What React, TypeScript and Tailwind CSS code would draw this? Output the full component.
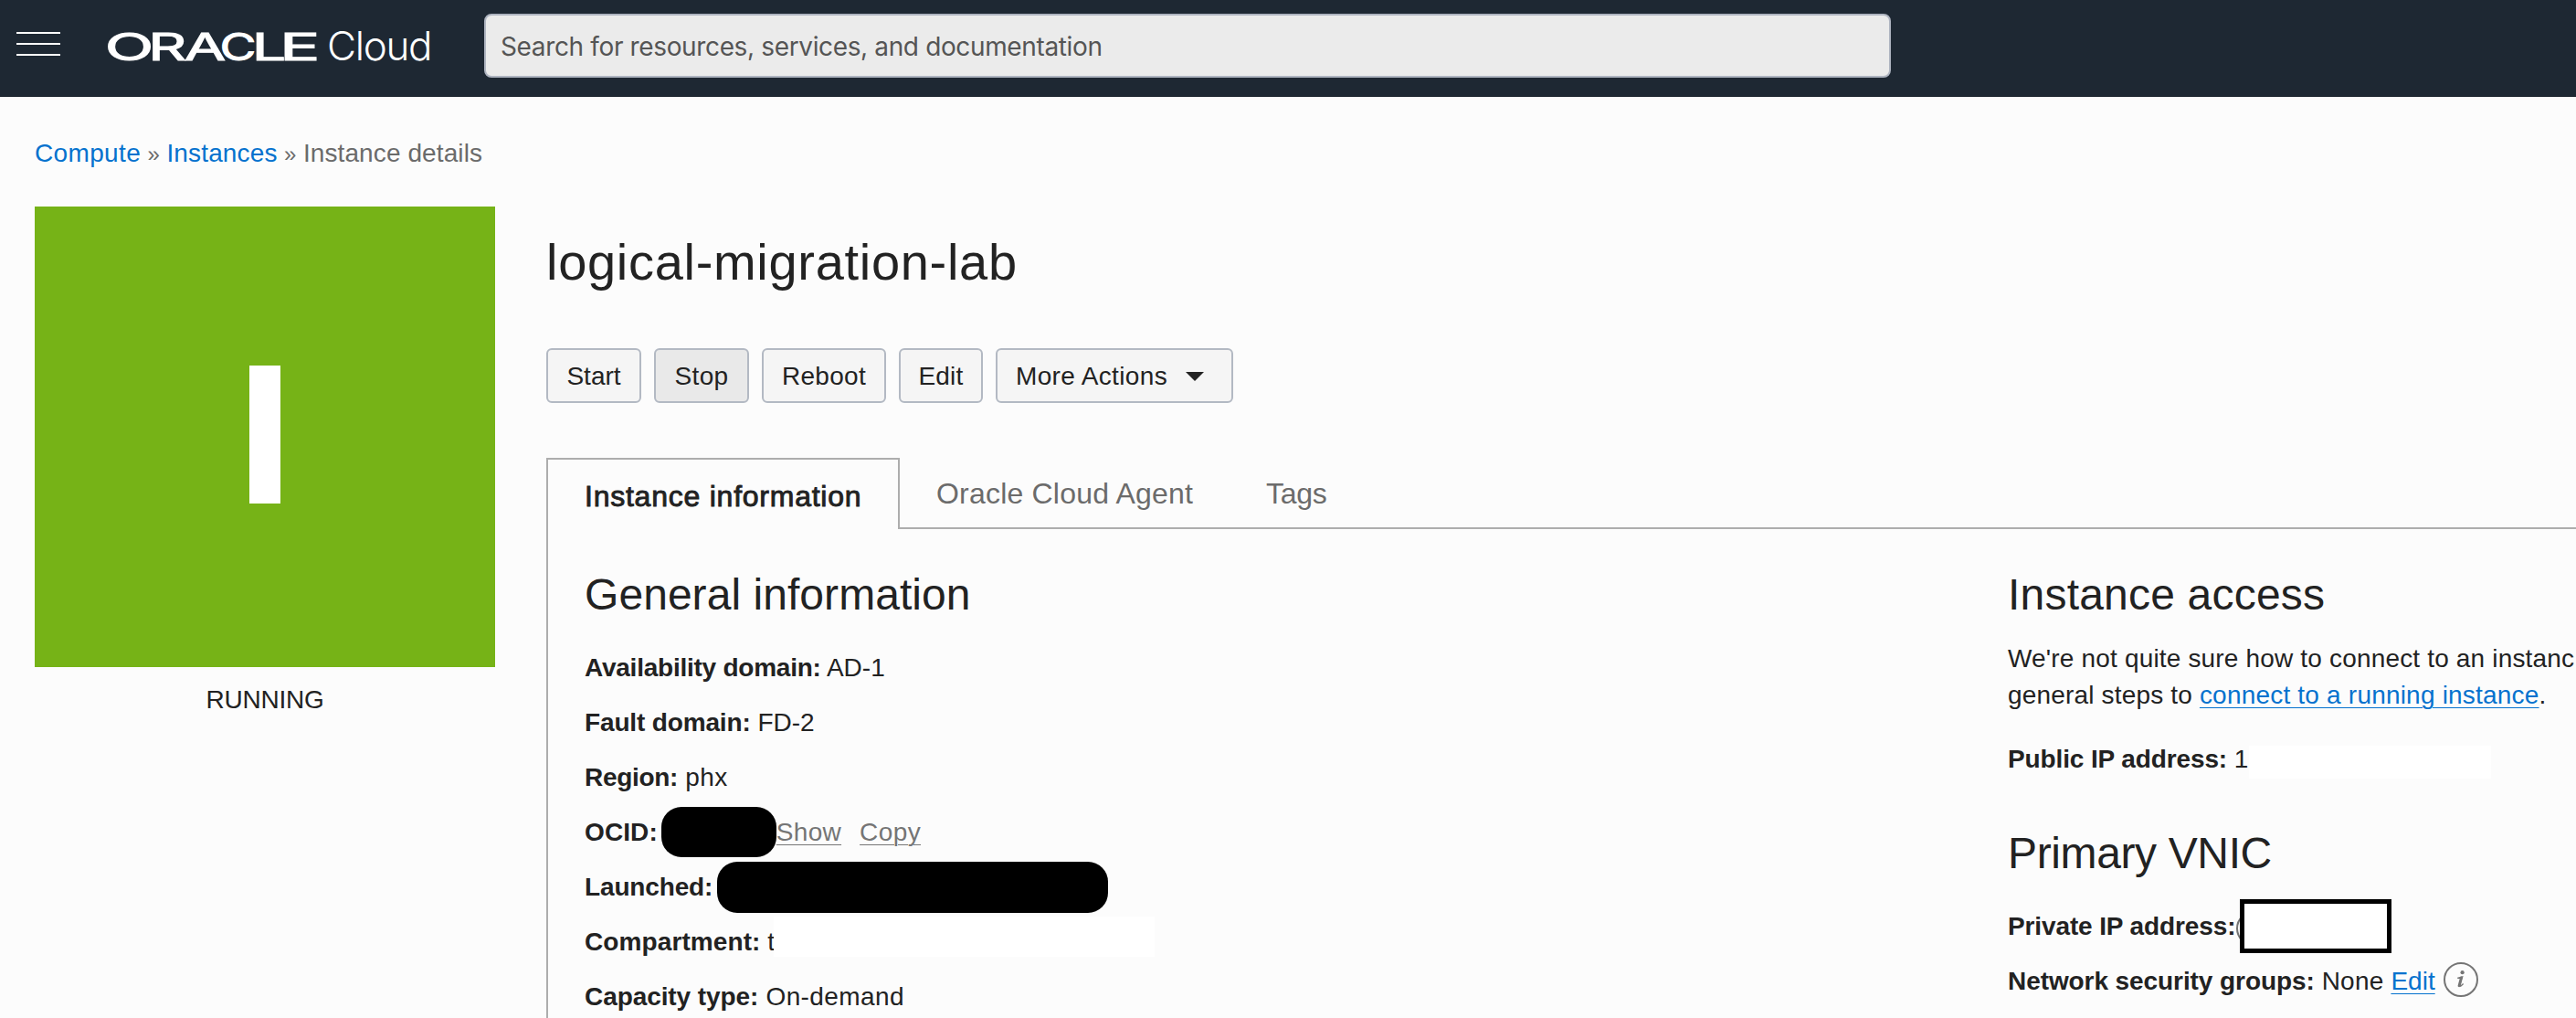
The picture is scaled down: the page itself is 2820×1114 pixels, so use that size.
import React from "react";

function Field({ label, tracking = "", children }: { label: string; tracking?: string; children?: React.ReactNode }) {
  return (
    <div className="flex h-[60px] items-center whitespace-pre">
      <span className={`font-bold ${tracking}`}>{label}</span>
      {children}
    </div>
  );
}

function Heading({ children, className = "" }: { children: React.ReactNode; className?: string }) {
  return <h2 className={`h-[60px] text-[48px] leading-[60px] ${className}`}>{children}</h2>;
}

function ActionButton({ children, className = "" }: { children: React.ReactNode; className?: string }) {
  return (
    <button
      className={`flex h-[60px] shrink-0 items-center justify-center rounded-[6px] border-2 border-[#b3b9c3] pt-[2px] ${className}`}
    >
      {children}
    </button>
  );
}

function InfoIcon({ className = "" }: { className?: string }) {
  return (
    <svg viewBox="0 0 38 38" className={`h-[38px] w-[38px] shrink-0 ${className}`}>
      <circle cx="19" cy="19" r="18" fill="none" stroke="#757575" strokeWidth="2" />
      <circle cx="20.6" cy="11.2" r="2.1" fill="#757575" />
      <path
        d="M15.2 17.4 L20.6 16 L18 25.6 Q17.8 26.8 19 26 L21.6 23.6"
        fill="none"
        stroke="#757575"
        strokeWidth="1.4"
      />
      <path d="M19.3 16.8 L16.9 25.8" stroke="#757575" strokeWidth="2.6" strokeLinecap="round" />
    </svg>
  );
}

function Header() {
  return (
    <header className="flex h-[106px] w-full items-start border-b border-[#18202a] bg-[#1e2833] text-white">
      <div className="ml-[18px] mt-[35px] flex w-[48px] flex-col gap-[10px]">
        <span className="h-[2px] bg-white" />
        <span className="h-[2px] bg-white" />
        <span className="h-[2px] bg-white" />
      </div>
      <svg viewBox="0 0 232 50" className="ml-[52px] mt-[26px] h-[50px] w-[232px] overflow-visible" fill="#fff">
        <text y="39.7" fontFamily="Inter" fontSize="41" fontWeight="400" stroke="#fff" strokeWidth="1">
          <tspan x="-3.3" textLength="53.6" lengthAdjust="spacingAndGlyphs">O</tspan>
          <tspan x="44.3" textLength="42" lengthAdjust="spacingAndGlyphs">R</tspan>
          <tspan x="83.7" textLength="45.5" lengthAdjust="spacingAndGlyphs">A</tspan>
          <tspan x="122.4" textLength="40" lengthAdjust="spacingAndGlyphs">C</tspan>
          <tspan x="157.7" textLength="37.5" lengthAdjust="spacingAndGlyphs">L</tspan>
          <tspan x="188.1" textLength="44.5" lengthAdjust="spacingAndGlyphs">E</tspan>
        </text>
      </svg>
      <span className="ml-[8px] mt-[20px] w-[120px] font-['Inter'] text-[44px] leading-[60px] font-light tracking-[-1.3px]">
        Cloud
      </span>
      <div className="ml-[52px] mt-[15px] flex h-[70px] w-[1540px] items-center rounded-[8px] border-2 border-[#aeb4c0] bg-[#ebebeb] pl-[16px] font-['Inter'] tracking-[-0.36px] text-[#555]">
        <span className="mt-[2px]">Search for resources, services, and documentation</span>
      </div>
    </header>
  );
}

export default function App() {
  return (
    <div className="h-[1114px] w-[2820px] overflow-hidden bg-[#fcfcfc] font-['Liberation_Sans',sans-serif] text-[28px] leading-[40px] text-[#222]">
      <Header />
      <nav className="mt-[42px] ml-[38px] flex h-[40px] items-baseline gap-[7.5px] text-[#6b6b6b]">
        <a className="tracking-[0.35px] text-[#0572ce]">Compute</a>
        <span className="text-[24px]">»</span>
        <a className="tracking-[0.14px] text-[#0572ce]">Instances</a>
        <span className="text-[24px]">»</span>
        <span className="tracking-[0.1px]">Instance details</span>
      </nav>
      <div className="mt-[38px] ml-[38px] flex gap-[56px]">
        <aside className="w-[504px] shrink-0">
          <div className="flex h-[504px] items-center justify-center bg-[#76b317]">
            <div className="mt-[-5px] h-[151px] w-[34px] bg-white" />
          </div>
          <div className="mt-[16px] text-center tracking-[-0.23px]">RUNNING</div>
        </aside>
        <main className="w-[2222px] shrink-0">
          <h1 className="mt-[29px] h-[64px] text-[56px] leading-[64px] tracking-[0.7px]">logical-migration-lab</h1>
          <div className="mt-[62px] flex gap-[14px]">
            <ActionButton className="w-[104px] bg-[#f5f5f5]">Start</ActionButton>
            <ActionButton className="w-[104px] bg-[#e9e9e9] tracking-[0.4px]">Stop</ActionButton>
            <ActionButton className="w-[136px] bg-[#f5f5f5] tracking-[0.3px]">Reboot</ActionButton>
            <ActionButton className="w-[92px] bg-[#f5f5f5] tracking-[0.2px]">Edit</ActionButton>
            <ActionButton className="w-[260px] bg-[#f5f5f5] tracking-[0.35px]">
              <span className="ml-[-10px]">More Actions</span>
              <svg viewBox="0 0 20 10" className="ml-[20px] h-[10px] w-[20px]" fill="#222">
                <path d="M0 0H20L10 10Z" />
              </svg>
            </ActionButton>
          </div>
          <div className="mt-[60px] flex h-[78px] text-[32px]">
            <div className="w-[387px] border-x-2 border-t-2 border-[#adadad] pt-[20px] pl-[40px] tracking-[0.76px] [-webkit-text-stroke:0.9px_#222]">
              Instance information
            </div>
            <div className="flex flex-1 border-b-2 border-[#adadad] pt-[19px] pl-[40px] text-[#6b6b6b]">
              <span className="w-[361px] tracking-[0.2px]">Oracle Cloud Agent</span>
              <span className="tracking-[-0.3px]">Tags</span>
            </div>
          </div>
          <div className="flex h-[540px] border-l-2 border-[#adadad] pt-[42px] pl-[40px]">
            <section className="w-[1558px] shrink-0">
              <Heading className="mb-[20px] tracking-[0.05px]">General information</Heading>
              <Field label="Availability domain:" tracking="tracking-[-0.24px]">
                <span className="tracking-[0px]"> AD-1</span>
              </Field>
              <Field label="Fault domain:" tracking="tracking-[-0.15px]"> FD-2</Field>
              <Field label="Region:" tracking="tracking-[-0.3px]">
                <span className="tracking-[0.4px]"> phx</span>
              </Field>
              <Field label="OCID:" tracking="tracking-[0.1px]">
                <span className="relative z-10 mt-[-2px] ml-[4px] h-[55px] w-[126px] rounded-[22px] bg-black" />
                <a className="tracking-[0.3px] text-[#757575] underline decoration-1 underline-offset-[4px]">Show</a>
                <a className="ml-[20px] tracking-[0.4px] text-[#757575] underline decoration-1 underline-offset-[4px]">
                  Copy
                </a>
              </Field>
              <Field label="Launched:" tracking="tracking-[-0.15px]">
                <span className="ml-[5px] h-[56px] w-[428px] rounded-[22px] bg-black" />
              </Field>
              <Field label="Compartment:" tracking="tracking-[0.1px]">
                <span> t</span>
                <span className="relative z-10 mt-[-12px] ml-[-1px] h-[44px] w-[417px] bg-white" />
              </Field>
              <Field label="Capacity type:" tracking="tracking-[-0.08px]">
                <span className="tracking-[0.4px]"> On-demand</span>
              </Field>
            </section>
            <section className="w-[622px] shrink-0">
              <Heading className="mb-[20px] tracking-[0.2px]">Instance access</Heading>
              <p className="mb-[20px] whitespace-nowrap tracking-[0.17px]">
                We're not quite sure how to connect to an instanc
                <br />
                general steps to{" "}
                <a className="tracking-[0.2px] text-[#0572ce] underline decoration-1 underline-offset-[4px]">
                  connect to a running instance
                </a>
                .
              </p>
              <Field label="Public IP address:" tracking="tracking-[-0.12px]">
                <span> 1</span>
                <span className="mt-[6px] ml-px h-[36px] w-[265px] bg-white" />
              </Field>
              <Heading className="mt-[43px] mb-[20px] tracking-[-0.37px]">Primary VNIC</Heading>
              <Field label="Private IP address:" tracking="tracking-[-0.12px]">
                <InfoIcon className="mt-[3px] ml-px" />
                <span className="relative z-10 mt-[-2px] ml-[-34px] h-[59px] w-[166px] border-[5px] border-black bg-white" />
              </Field>
              <Field label="Network security groups:" tracking="tracking-[-0.08px]">
                <span className="tracking-[0.2px]"> None </span>
                <a className="text-[#0572ce] underline decoration-1 underline-offset-[4px]">Edit</a>
                <InfoIcon className="mt-[-4px] ml-[9px]" />
              </Field>
            </section>
          </div>
        </main>
      </div>
    </div>
  );
}
